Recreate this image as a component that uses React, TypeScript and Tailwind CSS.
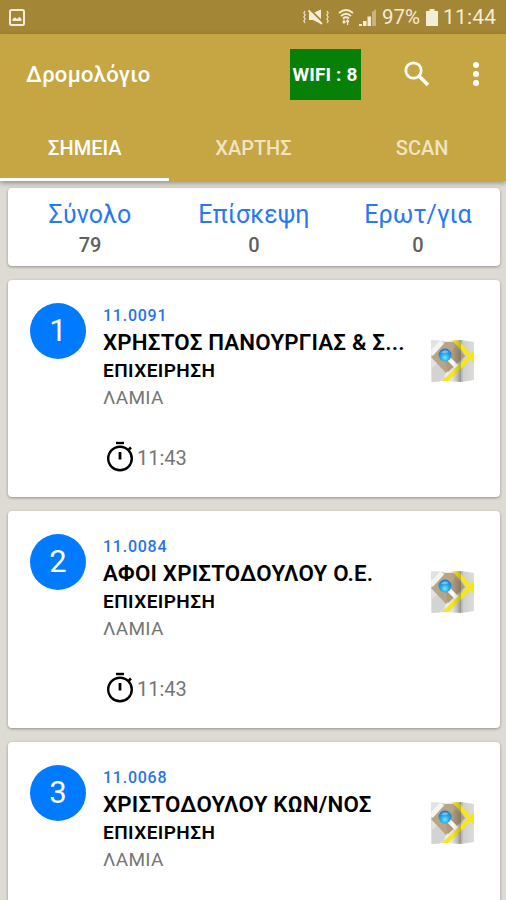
import React from 'react';

interface Stop {
    order: number;
    code: string;
    name: string;
    kind: string;
    city: string;
    time?: string;
}

const stops: Stop[] = [
    { order: 1, code: '11.0091', name: 'ΧΡΗΣΤΟΣ ΠΑΝΟΥΡΓΙΑΣ & Σ...', kind: 'ΕΠΙΧΕΙΡΗΣΗ', city: 'ΛΑΜΙΑ', time: '11:43' },
    { order: 2, code: '11.0084', name: 'ΑΦΟΙ ΧΡΙΣΤΟΔΟΥΛΟΥ Ο.Ε.', kind: 'ΕΠΙΧΕΙΡΗΣΗ', city: 'ΛΑΜΙΑ', time: '11:43' },
    { order: 3, code: '11.0068', name: 'ΧΡΙΣΤΟΔΟΥΛΟΥ ΚΩΝ/ΝΟΣ', kind: 'ΕΠΙΧΕΙΡΗΣΗ', city: 'ΛΑΜΙΑ' },
];

const totals = [
    { label: 'Σύνολο', value: 79 },
    { label: 'Επίσκεψη', value: 0 },
    { label: 'Ερωτ/για', value: 0 },
];

const tabs = ['ΣΗΜΕΙΑ', 'ΧΑΡΤΗΣ', 'SCAN'];

const MapIcon = () => (
    <svg viewBox="0 0 44 44" className="h-11 w-11 shrink-0">
        <defs>
            <linearGradient id="fold" x1="0" x2="1" y1="0" y2="0">
                <stop offset="0" stopColor="#e4e4e2" />
                <stop offset="0.3" stopColor="#d9d9d7" />
                <stop offset="0.34" stopColor="#f2f2f0" />
                <stop offset="0.6" stopColor="#d2d2d0" />
                <stop offset="0.7" stopColor="#b4b4b0" />
                <stop offset="0.74" stopColor="#cfcfcd" />
                <stop offset="1" stopColor="#dededc" />
            </linearGradient>
            <linearGradient id="shade" x1="0" x2="1" y1="0" y2="0">
                <stop offset="0" stopColor="#000" stopOpacity="0" />
                <stop offset="1" stopColor="#000" stopOpacity="0.22" />
            </linearGradient>
            <radialGradient id="globe" cx="0.5" cy="0.7" r="0.65">
                <stop offset="0" stopColor="#6fe8ff" />
                <stop offset="0.5" stopColor="#2aa6ee" />
                <stop offset="1" stopColor="#1878cf" />
            </radialGradient>
            <clipPath id="sheet">
                <path d="M0 1 L14 2 L30 1 L43 3 V41 L30 43 L14 42 L0 43Z" />
            </clipPath>
        </defs>
        <g clipPath="url(#sheet)">
            <rect width="44" height="44" fill="url(#fold)" />
            <path d="M1 29 L7 24 L16 33 L8 43 H1Z" fill="#d3d3d1" />
            <path d="M0 18 L14 3 H24 L34 17 L15 34Z" fill="#b8a588" />
            <path d="M14 20 L24 8 L34 17 L17 33Z" fill="#ad9a7c" />
            <path d="M0 15 L11 3" stroke="#f4f4f2" strokeWidth="5" />
            <path d="M18 20 L28 30" stroke="#fafafa" strokeWidth="4.5" />
            <path d="M22 -1 L44 22" stroke="#f5e71c" strokeWidth="4.5" />
            <path d="M13 43 L44 13" stroke="#f5e71c" strokeWidth="4.5" />
            <rect x="22" width="8" height="44" fill="url(#shade)" />
        </g>
        <circle cx="14" cy="16" r="6.4" fill="url(#globe)" />
        <path d="M10 13.5 Q14 9.5 18 13 Q14 15 10 13.5Z" fill="#a9dcf8" opacity="0.6" />
    </svg>
);

const StopwatchIcon = () => (
    <svg viewBox="0 0 28 32" className="h-8 w-7 shrink-0" fill="none" stroke="#000">
        <circle cx="14" cy="17.5" r="11.8" strokeWidth="2.4" />
        <path d="M10 2 H18" strokeWidth="2.4" />
        <path d="M14 11 V18.5" strokeWidth="2.8" />
        <path d="M22.3 9.2 L25 6.5" strokeWidth="2.6" />
    </svg>
);

const StatusBar = () => (
    <div className="flex h-[34px] shrink-0 items-center bg-[#a38636] pr-[10px] pl-[9px] text-[#f3ecd7]">
        <svg viewBox="0 0 16 17" className="h-[17px] w-4">
            <rect x="1" y="1" width="14" height="15" rx="1.5" fill="none" stroke="currentColor" strokeWidth="2" />
            <path d="M3.5 12 V10 L6 8.3 L8 10 L10.5 7.8 L12.5 10 V12Z" fill="currentColor" />
        </svg>
        <svg viewBox="0 0 26 18" className="ml-auto h-[18px] w-[26px]" fill="none" stroke="currentColor">
            <path d="M2 3 L.8 5 L2.2 7 L.8 9 L2.2 11 L.8 13 L2 15 M24 3 L25.2 5 L23.8 7 L25.2 9 L23.8 11 L25.2 13 L24 15" strokeWidth="1.1" />
            <path d="M6 5 H10 L18 1.5 V16 L10 12 H6Z" fill="currentColor" stroke="none" />
            <path d="M7.5 2 L20.5 15" stroke="#a38636" strokeWidth="2" />
            <path d="M5.5 2.5 L19 16" strokeWidth="1.8" />
        </svg>
        <svg viewBox="0 0 16 18" className="ml-[9px] h-[18px] w-4" fill="none" stroke="currentColor" strokeWidth="1.7">
            <path d="M1 5 Q8 -1 15 5 M3 8 Q8 3.5 13 8 M5 10.5 Q8 8 11 10.5" />
            <path d="M6 11.5 V15 M4.6 13.5 L6 15 L7.4 13.5 M9.6 17 V12 M8.2 13.8 L9.6 12 L11 13.8" strokeWidth="1.3" />
        </svg>
        <svg viewBox="0 0 18 17" className="ml-[5px] h-[17px] w-[18px]" fill="currentColor">
            <path d="M0 15 H3 V17 H0Z M4 12 H7.5 V17 H4Z M8.5 7.5 H12 V17 H8.5Z" />
            <path d="M13 3 L17 0 V17 H13Z" opacity="0.45" />
        </svg>
        <span className="ml-[5px] w-[39px] text-[20.5px] leading-[24px] whitespace-nowrap">97%</span>
        <svg viewBox="0 0 12 17" className="ml-[5px] h-[17px] w-3" fill="currentColor">
            <path d="M3.5 0 H8.5 V2 H12 V17 H0 V2 H3.5Z" />
        </svg>
        <span className="ml-[5px] w-[53px] text-[21px] leading-[26px] tracking-[0.2px] whitespace-nowrap">11:44</span>
    </div>
);

const StopCard = ({ stop }: { stop: Stop }) => (
    <div className="flex h-[217px] shrink-0 rounded-[4px] bg-white pr-[25px] pl-[22px] shadow-[0_1px_3px_rgba(0,0,0,0.35)]">
        <div className="mt-[23px] flex h-14 w-14 shrink-0 items-center justify-center rounded-full bg-[#007bff] pt-px text-[31px] text-white">
            {stop.order}
        </div>
        <div className="ml-[17px] min-w-0 flex-1 pt-[25px] whitespace-nowrap">
            <div className="text-[16px] leading-[21px] font-medium tracking-[0.75px] text-[#2774e8]">{stop.code}</div>
            <div className="text-[22.3px] leading-[32px] font-semibold tracking-[0.2px] text-black">{stop.name}</div>
            <div className="text-[19px] leading-[26px] font-semibold tracking-[0.45px] text-black">{stop.kind}</div>
            <div className="text-[19px] leading-[28px] tracking-[0.3px] text-[#757575]">{stop.city}</div>
            {stop.time && (
                <div className="mt-[28px] flex items-center pl-[3px]">
                    <StopwatchIcon />
                    <span className="ml-[3px] pt-[3px] text-[20px] text-[#757575]">{stop.time}</span>
                </div>
            )}
        </div>
        <div className="mt-[59px]">
            <MapIcon />
        </div>
    </div>
);

export default function App() {
    return (
        <div className="flex h-[900px] w-[506px] flex-col overflow-hidden bg-[#dddbd3] font-[Roboto,sans-serif]">
            <StatusBar />

            {/* Toolbar and tabs */}
            <header className="relative h-[147px] shrink-0 bg-[#c5a643] text-white shadow-[0_2px_5px_rgba(0,0,0,0.35)]">
                <div className="flex h-[80px] items-center pl-[26px]">
                    <h1 className="pt-px text-[22px] font-medium tracking-[0.3px]">Δρομολόγιο</h1>
                    <div className="ml-auto flex h-[51px] w-[71px] items-center justify-center bg-[#078007] pt-[2px] pr-px text-[19px] font-bold tracking-[0.15px] whitespace-nowrap">
                        WIFI : 8
                    </div>
                    <svg viewBox="0 0 26 26" className="ml-[43px] h-[26px] w-[26px]" fill="none" stroke="currentColor">
                        <circle cx="9.5" cy="9.5" r="7.7" strokeWidth="2.8" />
                        <path d="M15 15 L24 24" strokeWidth="3.6" />
                    </svg>
                    <svg viewBox="0 0 6 24" className="mr-[27px] ml-[43px] h-6 w-[6px]" fill="currentColor">
                        <circle cx="3" cy="3" r="3" />
                        <circle cx="3" cy="12" r="3" />
                        <circle cx="3" cy="21" r="3" />
                    </svg>
                </div>
                <nav className="grid h-[67px] grid-cols-3 text-[20px] font-medium">
                    {tabs.map((tab, i) => (
                        <div
                            key={tab}
                            className={i === 0
                                ? 'flex items-center justify-center border-b-[3px] border-white pt-[3px] pl-px'
                                : 'flex items-center justify-center border-b-[3px] border-transparent pt-[3px] pl-px text-[#f0e4c0]'}
                        >
                            {tab}
                        </div>
                    ))}
                </nav>
            </header>

            <main className="flex flex-col gap-[14px] pt-[7px] pr-[6px] pl-[8px]">
                <section className="grid h-[78px] shrink-0 grid-cols-3 rounded-[4px] bg-white text-center shadow-[0_1px_3px_rgba(0,0,0,0.35)]">
                    {totals.map((total) => (
                        <div key={total.label} className="pt-[11px]">
                            <div className="text-[25px] leading-[32px] tracking-[0.1px] text-[#2779f0]">{total.label}</div>
                            <div className="text-[20px] leading-[28px] font-medium text-[#606060]">{total.value}</div>
                        </div>
                    ))}
                </section>
                {stops.map((stop) => (
                    <StopCard key={stop.order} stop={stop} />
                ))}
            </main>
        </div>
    );
}
